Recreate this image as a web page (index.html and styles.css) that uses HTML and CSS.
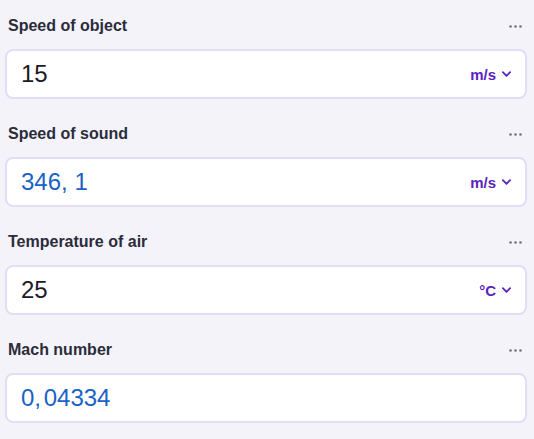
FILE: index.html
```html
<!DOCTYPE html>
<html>
<head>
<meta charset="utf-8">
<link rel="stylesheet" href="styles.css">
</head>
<body>
<div class="form">
  <div class="field">
    <div class="head"><span class="label">Speed of object</span><svg class="more" viewBox="0 0 13 3" width="13" height="3"><circle cx="1.5" cy="1.5" r="1.3"/><circle cx="6.5" cy="1.5" r="1.3"/><circle cx="11.5" cy="1.5" r="1.3"/></svg></div>
    <div class="box"><span class="value">15</span><span class="unit">m/s<svg class="chev" viewBox="0 0 10 6" width="9" height="6"><path d="M1 1l4 4 4-4" fill="none" stroke="currentColor" stroke-width="2" stroke-linecap="round" stroke-linejoin="round"/></svg></span></div>
  </div>
  <div class="field">
    <div class="head"><span class="label">Speed of sound</span><svg class="more" viewBox="0 0 13 3" width="13" height="3"><circle cx="1.5" cy="1.5" r="1.3"/><circle cx="6.5" cy="1.5" r="1.3"/><circle cx="11.5" cy="1.5" r="1.3"/></svg></div>
    <div class="box"><span class="value result">346, 1</span><span class="unit">m/s<svg class="chev" viewBox="0 0 10 6" width="9" height="6"><path d="M1 1l4 4 4-4" fill="none" stroke="currentColor" stroke-width="2" stroke-linecap="round" stroke-linejoin="round"/></svg></span></div>
  </div>
  <div class="field">
    <div class="head"><span class="label">Temperature of air</span><svg class="more" viewBox="0 0 13 3" width="13" height="3"><circle cx="1.5" cy="1.5" r="1.3"/><circle cx="6.5" cy="1.5" r="1.3"/><circle cx="11.5" cy="1.5" r="1.3"/></svg></div>
    <div class="box"><span class="value">25</span><span class="unit">°C<svg class="chev" viewBox="0 0 10 6" width="9" height="6"><path d="M1 1l4 4 4-4" fill="none" stroke="currentColor" stroke-width="2" stroke-linecap="round" stroke-linejoin="round"/></svg></span></div>
  </div>
  <div class="field">
    <div class="head"><span class="label">Mach number</span><svg class="more" viewBox="0 0 13 3" width="13" height="3"><circle cx="1.5" cy="1.5" r="1.3"/><circle cx="6.5" cy="1.5" r="1.3"/><circle cx="11.5" cy="1.5" r="1.3"/></svg></div>
    <div class="box"><span class="value result tight">0, 04334</span></div>
  </div>
</div>
</body>
</html>
```
FILE: styles.css
```css
html, body {
  margin: 0;
  padding: 0;
  background: #f4f3fa;
  font-family: "Liberation Sans", Arial, sans-serif;
}
.form {
  padding: 13px 7px 0 5px;
}
.field {
  margin-bottom: 22px;
}
.head {
  box-sizing: border-box;
  height: 24px;
  display: flex;
  align-items: center;
  justify-content: space-between;
  padding: 2px 5px 0 3px;
  margin-bottom: 12px;
}
.label {
  font-size: 16px;
  font-weight: bold;
  color: #2b2c3b;
}
.more {
  display: block;
  fill: #72727e;
}
.box {
  box-sizing: border-box;
  height: 50px;
  background: #fff;
  border: 2px solid #e2ddf6;
  border-radius: 8px;
  display: flex;
  align-items: center;
  justify-content: space-between;
  padding: 0 14px 0 14px;
}
.value {
  font-size: 24px;
  color: #1b1b28;
}
.value.result {
  color: #1a63c4;
}
.value.tight {
  word-spacing: -4px;
}
.unit {
  display: flex;
  align-items: center;
  gap: 6px;
  font-size: 15px;
  font-weight: bold;
  color: #5b23c0;
}
.chev {
  display: block;
}
```
